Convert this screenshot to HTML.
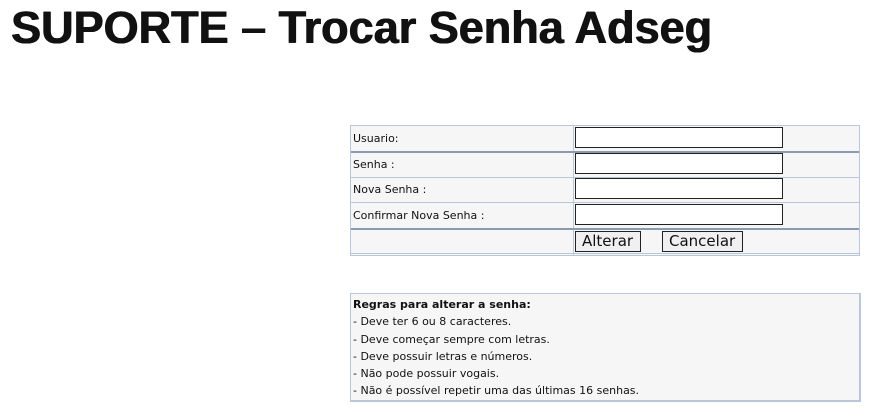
<!DOCTYPE html>
<html><head><meta charset="utf-8"><style>
body{margin:0;width:870px;height:407px;background:#fff;position:relative;overflow:hidden;font-family:"DejaVu Sans",Verdana,sans-serif;}
h1{position:absolute;left:11px;top:0;margin:0;font:bold 45px/56px "Liberation Sans",sans-serif;letter-spacing:0px;color:#111;text-shadow:0.6px 0 0 #111,-0.4px 0 0 #111;}
.t{position:absolute;left:350px;top:125px;width:510px;height:131px;border:1px solid #b8c8dc;background:#f6f6f6;box-sizing:border-box;}
.r{position:absolute;left:0;width:508px;border-top:1px solid #b8c8dc;}
.l{position:absolute;left:2px;font-size:11px;color:#111;}
.v{position:absolute;left:222px;top:0;bottom:0;border-left:1px solid #b8c8dc;}
.in{position:absolute;left:224px;width:208px;height:21px;border:1px solid #222;background:#fff;box-sizing:border-box;}
.b{position:absolute;top:105px;height:21px;border:1px solid #222;background:#f0f0f0;font:15px "DejaVu Sans",sans-serif;line-height:19px;padding:0 6px;box-sizing:border-box;color:#111}
.rg{position:absolute;left:350px;top:293px;width:511px;height:109px;border:2px solid #b8c8dc;border-width:1px 2px 2px 1px;background:#f6f6f6;box-sizing:border-box;font-size:11px;line-height:17.3px;padding:2px 2px;color:#111}
</style></head><body>
<h1>SUPORTE – Trocar Senha Adseg</h1>
<div class="t">
<div class="v"></div>
<div class="l" style="top:6px">Usuario:</div>
<div class="in" style="top:1px"></div>
<div class="r" style="top:25px;border-top:2px solid #8a9ab0"></div>
<div class="l" style="top:32px">Senha :</div>
<div class="in" style="top:27px"></div>
<div class="r" style="top:51px"></div>
<div class="l" style="top:57px">Nova Senha :</div>
<div class="in" style="top:52px"></div>
<div class="r" style="top:76px"></div>
<div class="l" style="top:83px">Confirmar Nova Senha :</div>
<div class="in" style="top:78px"></div>
<div class="r" style="top:102px;border-top:2px solid #8a9ab0"></div>
<div class="b" style="left:224px;width:66px">Alterar</div>
<div class="b" style="left:311px;width:81px">Cancelar</div>
<div class="r" style="top:127px"></div>
</div>
<div class="rg"><b>Regras para alterar a senha:</b><br>- Deve ter 6 ou 8 caracteres.<br>- Deve começar sempre com letras.<br>- Deve possuir letras e números.<br>- Não pode possuir vogais.<br>- Não é possível repetir uma das últimas 16 senhas.</div>
</body></html>
